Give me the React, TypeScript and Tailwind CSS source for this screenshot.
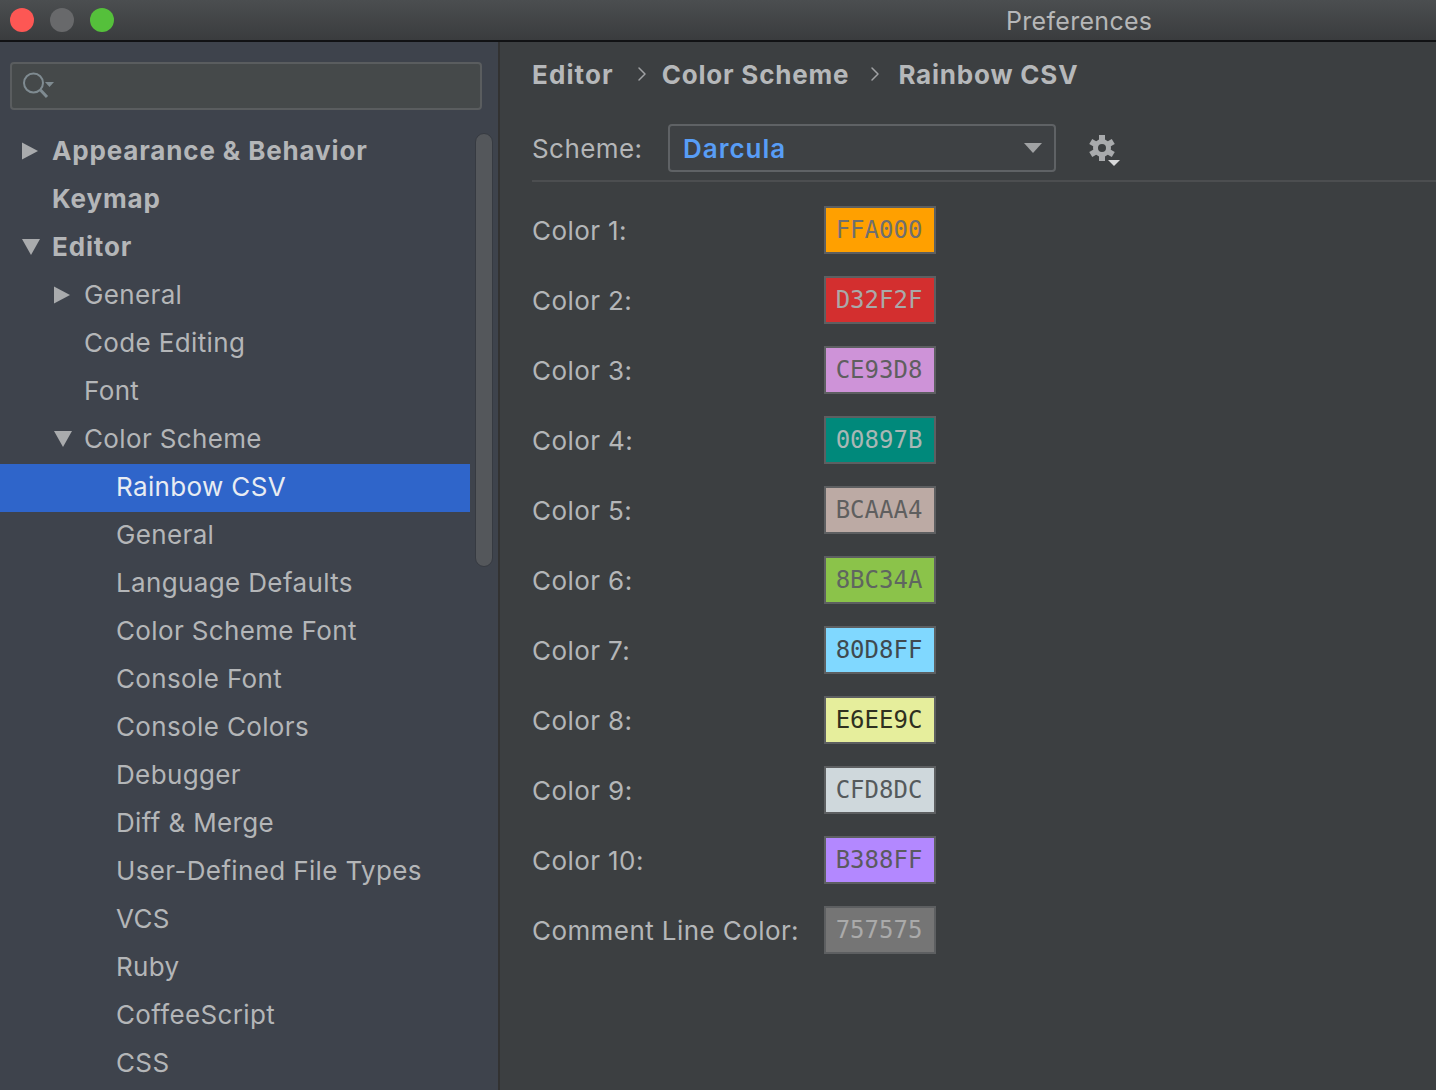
import { ChevronRight } from 'lucide-react';

type TreeRow = {
  label: string;
  indent: number;
  bold?: boolean;
  arrow?: 'right' | 'down';
  selected?: boolean;
};

const treeRows: TreeRow[] = [
  { label: 'Appearance & Behavior', indent: 53, bold: true, arrow: 'right' },
  { label: 'Keymap', indent: 53, bold: true },
  { label: 'Editor', indent: 53, bold: true, arrow: 'down' },
  { label: 'General', indent: 85, arrow: 'right' },
  { label: 'Code Editing', indent: 85 },
  { label: 'Font', indent: 85 },
  { label: 'Color Scheme', indent: 85, arrow: 'down' },
  { label: 'Rainbow CSV', indent: 117, selected: true },
  { label: 'General', indent: 117 },
  { label: 'Language Defaults', indent: 117 },
  { label: 'Color Scheme Font', indent: 117 },
  { label: 'Console Font', indent: 117 },
  { label: 'Console Colors', indent: 117 },
  { label: 'Debugger', indent: 117 },
  { label: 'Diff & Merge', indent: 117 },
  { label: 'User-Defined File Types', indent: 117 },
  { label: 'VCS', indent: 117 },
  { label: 'Ruby', indent: 117 },
  { label: 'CoffeeScript', indent: 117 },
  { label: 'CSS', indent: 117 },
];

const colors = [
  { label: 'Color 1:', value: 'FFA000', bg: 'bg-[#ffa000]', text: 'text-[#6f6f6f]' },
  { label: 'Color 2:', value: 'D32F2F', bg: 'bg-[#d32f2f]', text: 'text-[#a9a9a9]' },
  { label: 'Color 3:', value: 'CE93D8', bg: 'bg-[#ce93d8]', text: 'text-[#5f5f5f]' },
  { label: 'Color 4:', value: '00897B', bg: 'bg-[#00897b]', text: 'text-[#a9b7b5]' },
  { label: 'Color 5:', value: 'BCAAA4', bg: 'bg-[#bcaaa4]', text: 'text-[#5f5f5f]' },
  { label: 'Color 6:', value: '8BC34A', bg: 'bg-[#8bc34a]', text: 'text-[#5f6660]' },
  { label: 'Color 7:', value: '80D8FF', bg: 'bg-[#80d8ff]', text: 'text-[#3f4a50]' },
  { label: 'Color 8:', value: 'E6EE9C', bg: 'bg-[#e6ee9c]', text: 'text-[#2f3020]' },
  { label: 'Color 9:', value: 'CFD8DC', bg: 'bg-[#cfd8dc]', text: 'text-[#555a5c]' },
  { label: 'Color 10:', value: 'B388FF', bg: 'bg-[#b388ff]', text: 'text-[#5a5a5f]' },
  { label: 'Comment Line Color:', value: '757575', bg: 'bg-[#757575]', text: 'text-[#aaaaaa]' },
];

function TreeArrow({ dir, indent }: { dir: 'right' | 'down'; indent: number }) {
  const left = indent - 31;
  return (
    <span className="absolute top-0 bottom-[2px] flex items-center" style={{ left }}>
      <svg width="18" height="18" viewBox="0 0 18 18" className="fill-[#a9abad]">
        {dir === 'right' ? <path d="M0 0.5 L16 9 L0 17.5 Z" /> : <path d="M0 1 L18 1 L9 17 Z" />}
      </svg>
    </span>
  );
}

export default function App() {
  return (
    <div className="w-[1436px] h-[1090px] overflow-hidden flex flex-col bg-[#3c3f41] font-['Inter','Noto_Sans',sans-serif] text-[26px]">
      {/* Title bar */}
      <div className="h-[42px] shrink-0 flex items-center pl-[10px] border-b-2 border-[#111214] bg-gradient-to-b from-[#4b4e50] to-[#3a3c3e]">
        <div className="flex gap-[16px]">
          <span className="w-6 h-6 rounded-full bg-[#fd5754]" />
          <span className="w-6 h-6 rounded-full bg-[#68696b]" />
          <span className="w-6 h-6 rounded-full bg-[#55c03b]" />
        </div>
        <span className="ml-[892px] pt-[3px] text-[25px] tracking-[0.3px] text-[#b6b7b8]">Preferences</span>
      </div>

      <div className="flex-1 flex min-h-0">
        {/* Sidebar */}
        <aside className="w-[500px] shrink-0 bg-[#3e434c] border-r-2 border-[#323232] overflow-hidden">
          <div className="mt-[20px] ml-[10px] w-[472px] h-[48px] flex items-center pl-[11px] rounded-[4px] border-2 border-[#5a5d5f] bg-[#45494a]">
            <svg width="32" height="28" viewBox="0 0 32 28" fill="none" className="stroke-[#7f8b91]">
              <circle cx="10.500" cy="11" r="9.500" strokeWidth="2" />
              <path d="M17.500 18 L24 25" strokeWidth="3" />
              <path d="M22 10 L31 10 L26.500 15 Z" className="fill-[#7f8b91] stroke-none" />
            </svg>
          </div>
          <div className="flex mt-[18px]">
            <div className="w-[470px] shrink-0">
              {treeRows.map((row, i) => (
                <div
                  key={i}
                  className={`relative h-[48px] flex items-center pb-[4px] whitespace-nowrap ${
                    row.selected ? 'bg-[#2f65ca] text-[#e8ecf2]' : 'text-[#b4b6b8]'
                  } ${row.bold ? 'font-bold tracking-[0.85px]' : 'tracking-[0.36px]'}`}
                  style={{ paddingLeft: row.indent - 1 }}
                >
                  {row.arrow && <TreeArrow dir={row.arrow} indent={row.indent} />}
                  {row.label}
                </div>
              ))}
            </div>
            <div className="ml-[5px] mt-[5px] w-[18px] h-[434px] rounded-full bg-[#54575b] border border-[#363a41]" />
          </div>
        </aside>

        {/* Content */}
        <main className="flex-1 min-w-0 pl-[32px] text-[#b4b6b8] tracking-[0.42px]">
          <div className="h-[64px] flex items-center font-bold tracking-[0.8px] text-[#b6b8ba] whitespace-nowrap">
            <span className="tracking-[1.1px]">Editor</span>
            <ChevronRight size={24} strokeWidth={1.500} className="ml-[16px] mr-[8px] text-[#a0a2a4]" />
            <span>Color Scheme</span>
            <ChevronRight size={24} strokeWidth={1.500} className="ml-[14px] mr-[11px] text-[#a0a2a4]" />
            <span>Rainbow CSV</span>
          </div>

          <div className="mt-[18px] h-[58px] flex items-start border-b-2 border-[#4c4e50]">
            <span className="w-[136px] h-[48px] flex items-center shrink-0">Scheme:</span>
            <div className="w-[388px] h-[48px] flex items-center justify-between pl-[13px] pr-[12px] rounded-[4px] border-2 border-[#5f6265] bg-[#3e4144]">
              <span className="font-semibold tracking-[1px] text-[#589df6]">Darcula</span>
              <svg width="18" height="10" viewBox="0 0 18 10" className="fill-[#a0a2a4]">
                <path d="M0 0 L18 0 L9 10 Z" />
              </svg>
            </div>
            <svg width="32" height="32" viewBox="0 0 32 32" className="ml-[33px] mt-[11px] shrink-0">
              <g transform="translate(13 13)" fill="#a9abad">
                <circle r="6.500" fill="none" stroke="#a9abad" strokeWidth="5" />
                <rect x="-3" y="-13" width="6" height="6" />
                <rect x="-3" y="-13" width="6" height="6" transform="rotate(60)" />
                <rect x="-3" y="-13" width="6" height="6" transform="rotate(120)" />
                <rect x="-3" y="-13" width="6" height="6" transform="rotate(180)" />
                <rect x="-3" y="-13" width="6" height="6" transform="rotate(240)" />
                <rect x="-3" y="-13" width="6" height="6" transform="rotate(300)" />
              </g>
              <path fill="#d8d9da" d="M19 25h12l-6 6z" />
            </svg>
          </div>

          <div className="mt-[24px] flex flex-col gap-[22px]">
            {colors.map((c) => (
              <div key={c.label} className="h-[48px] flex items-center">
                <span className="w-[292px] shrink-0 whitespace-nowrap">{c.label}</span>
                <div
                  className={`w-[112px] h-[48px] flex items-center justify-center pr-[2px] tracking-normal border-2 border-[#5d5f61] font-['DejaVu_Sans_Mono',monospace] text-[24px] ${c.bg} ${c.text}`}
                >
                  {c.value}
                </div>
              </div>
            ))}
          </div>
        </main>
      </div>
    </div>
  );
}
